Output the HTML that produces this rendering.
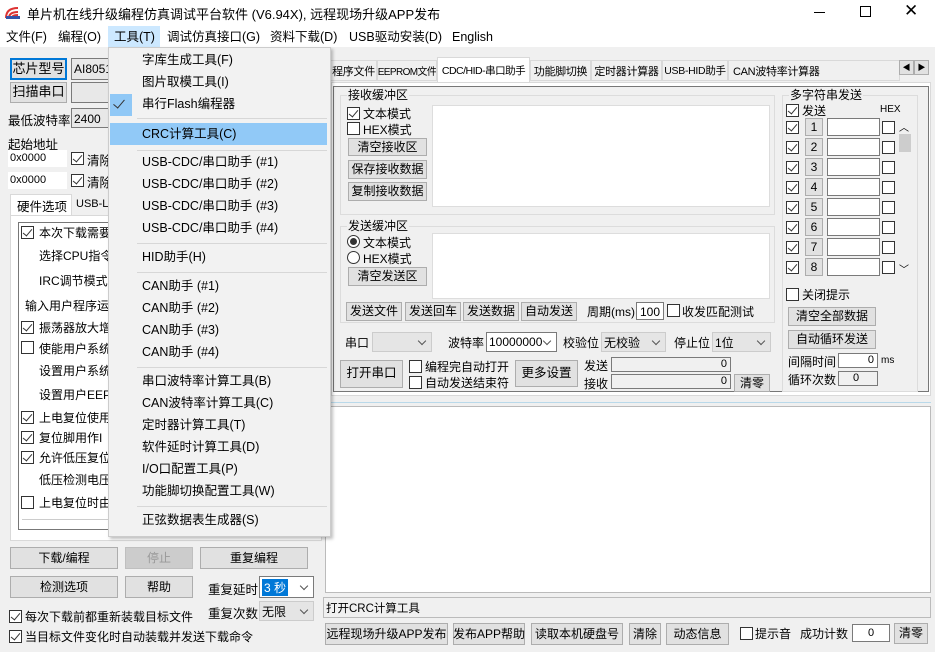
<!DOCTYPE html>
<html><head><meta charset="utf-8"><style>
*{box-sizing:border-box;margin:0;padding:0}
body{width:935px;height:652px;overflow:hidden;background:#f0f0f0;position:relative;font-family:"Liberation Sans","Noto Sans CJK SC",sans-serif;font-size:12px;color:#000}
.a{position:absolute;white-space:nowrap}
.m{position:absolute;top:28px;font-size:12.5px;line-height:18px;white-space:nowrap}
.b{position:absolute;background:#e1e1e1;border:1px solid #adadad;text-align:center;white-space:nowrap;line-height:1.4;display:flex;align-items:center;justify-content:center}
.cb{position:absolute;width:13px;height:13px;border:1px solid #333;background:#fff}
.cb.c::after{content:"";position:absolute;left:3px;top:0px;width:4px;height:8px;border:solid #333;border-width:0 1.5px 1.5px 0;transform:rotate(40deg)}
.in{position:absolute;background:#fff;border:1px solid #7a7a7a;white-space:nowrap;line-height:1.2}
.cmb{position:absolute;background:#fff;border:1px solid #7a7a7a;padding-left:2px;white-space:nowrap;display:flex;align-items:center}
.cmb::after{content:"";position:absolute;right:6px;top:calc(50% - 4px);width:5px;height:5px;border:solid #555;border-width:0 1px 1px 0;transform:rotate(45deg)}
.grp{position:absolute;border:1px solid #dcdcdc}
.lbl{position:absolute;background:#f0f0f0;padding:0 1px;white-space:nowrap;line-height:1}
.mi{position:absolute;left:142px;font-size:12.5px;line-height:16px;color:#000;white-space:nowrap}
.sep{position:absolute;left:137px;width:190px;height:1px;background:#d7d7d7}
.tab{position:absolute;top:60px;height:21px;border:1px solid #d9d9d9;background:#f0f0f0;display:flex;align-items:center;justify-content:center;white-space:nowrap;font-size:11px;letter-spacing:-0.3px;overflow:hidden}
</style></head><body>
<div class="a" style="left:0;top:0;width:935px;height:47px;background:#fff"></div>
<svg class="a" style="left:4px;top:4px" width="18" height="16"><path d="M2 14 Q2 4 14 4" stroke="#d33" stroke-width="2" fill="none"/><path d="M5 14 Q5 8 14 8" stroke="#d33" stroke-width="2" fill="none"/><path d="M8 14 Q8 11 14 11" stroke="#d33" stroke-width="2" fill="none"/><rect x="2" y="12" width="14" height="3" fill="#35a"/></svg>
<div class="a" style="left:27px;top:4px;font-size:13px">单片机在线升级编程仿真调试平台软件 (V6.94X), 远程现场升级APP发布</div>
<div class="a" style="left:814px;top:12px;width:11px;height:1px;background:#000"></div>
<div class="a" style="left:860px;top:6px;width:11px;height:11px;border:1px solid #000"></div>
<div class="a" style="left:904px;top:1px;font-size:17px">✕</div>
<div class="a" style="left:108px;top:26px;width:52px;height:22px;background:#cce8ff"></div>
<div class="m" style="left:6px">文件(F)</div>
<div class="m" style="left:58px">编程(O)</div>
<div class="m" style="left:114px">工具(T)</div>
<div class="m" style="left:167px">调试仿真接口(G)</div>
<div class="m" style="left:270px">资料下载(D)</div>
<div class="m" style="left:349px">USB驱动安装(D)</div>
<div class="m" style="left:452px">English</div>

<div class="b" style="left:10px;top:58px;width:57px;height:22px;border:2px solid #0078d7;font-size:13px">芯片型号</div>
<div class="in" style="left:71px;top:58px;width:60px;height:22px;background:#e8e8e8;padding:3px 2px">AI8051</div>
<div class="b" style="left:10px;top:82px;width:57px;height:21px;font-size:13px">扫描串口</div>
<div class="in" style="left:71px;top:82px;width:60px;height:21px;background:#e8e8e8"></div>
<div class="a" style="left:8px;top:110px;font-size:12.5px">最低波特率</div>
<div class="in" style="left:71px;top:108px;width:60px;height:20px;background:#e8e8e8;padding:3px 2px">2400</div>
<div class="a" style="left:8px;top:134px;font-size:12.5px">起始地址</div>
<div class="in" style="left:8px;top:150px;width:59px;height:17px;border-color:#fff;font-size:11px;padding:1px">0x0000</div>
<div class="cb c" style="left:71px;top:152px"></div><div class="a" style="left:87px;top:150px;font-size:12.5px">清除</div>
<div class="in" style="left:8px;top:172px;width:59px;height:17px;border-color:#fff;font-size:11px;padding:1px">0x0000</div>
<div class="cb c" style="left:71px;top:174px"></div><div class="a" style="left:87px;top:172px;font-size:12.5px">清除</div>
<div class="a" style="left:10px;top:194px;width:62px;height:22px;background:#fff;border:1px solid #d9d9d9;border-bottom:none"></div>
<div class="a" style="left:17px;top:196px;font-size:12.5px">硬件选项</div>
<div class="a" style="left:76px;top:198px;font-size:11px">USB-L</div>
<div class="a" style="left:10px;top:215px;width:312px;height:326px;background:#fff;border:1px solid #d9d9d9"></div>
<div class="a" style="left:18px;top:222px;width:304px;height:308px;border:1px solid #777;background:#fff"></div>
<div class="cb c" style="left:21px;top:226px"></div><div class="a" style="left:39px;top:224px">本次下载需要</div>
<div class="a" style="left:39px;top:247px">选择CPU指令</div>
<div class="a" style="left:39px;top:272px">IRC调节模式</div>
<div class="a" style="left:25px;top:297px">输入用户程序运</div>
<div class="cb c" style="left:21px;top:321px"></div><div class="a" style="left:39px;top:319px">振荡器放大增</div>
<div class="cb" style="left:21px;top:341px"></div><div class="a" style="left:39px;top:340px">使能用户系统</div>
<div class="a" style="left:39px;top:362px">设置用户系统</div>
<div class="a" style="left:39px;top:386px">设置用户EEP</div>
<div class="cb c" style="left:21px;top:411px"></div><div class="a" style="left:39px;top:409px">上电复位使用</div>
<div class="cb c" style="left:21px;top:431px"></div><div class="a" style="left:39px;top:429px">复位脚用作I</div>
<div class="cb c" style="left:21px;top:451px"></div><div class="a" style="left:39px;top:449px">允许低压复位</div>
<div class="a" style="left:39px;top:471px">低压检测电压</div>
<div class="cb" style="left:21px;top:496px"></div><div class="a" style="left:39px;top:494px">上电复位时由</div>
<div class="a" style="left:22px;top:519px;width:300px;height:1px;background:#ccc"></div>
<div class="b" style="left:10px;top:547px;width:108px;height:22px">下载/编程</div>
<div class="b" style="left:125px;top:547px;width:68px;height:22px;background:#ccc;border-color:#bfbfbf;color:#999">停止</div>
<div class="b" style="left:200px;top:547px;width:108px;height:22px">重复编程</div>
<div class="b" style="left:10px;top:576px;width:108px;height:22px">检测选项</div>
<div class="b" style="left:125px;top:576px;width:68px;height:22px">帮助</div>
<div class="a" style="left:208px;top:579px;font-size:12.5px">重复延时</div>
<div class="cmb" style="left:259px;top:576px;width:55px;height:22px"><span style="background:#0078d7;color:#fff;padding:0 2px">3 秒</span></div>
<div class="a" style="left:208px;top:603px;font-size:12.5px">重复次数</div>
<div class="cmb" style="left:259px;top:601px;width:55px;height:20px;background:#e5e5e5;border-color:#ccc">无限</div>
<div class="cb c" style="left:9px;top:610px"></div><div class="a" style="left:25px;top:608px">每次下载前都重新装载目标文件</div>
<div class="cb c" style="left:9px;top:630px"></div><div class="a" style="left:25px;top:628px">当目标文件变化时自动装载并发送下载命令</div>

<div class="tab" style="left:330px;width:47px">程序文件</div>
<div class="tab" style="left:377px;width:60px;font-size:10px;letter-spacing:-0.6px">EEPROM文件</div>
<div class="tab" style="left:437px;top:57px;height:25px;width:93px;background:#fff;border-bottom:none;font-size:10.5px;letter-spacing:-0.5px">CDC/HID-串口助手</div>
<div class="tab" style="left:530px;width:61px">功能脚切换</div>
<div class="tab" style="left:591px;width:71px">定时器计算器</div>
<div class="tab" style="left:662px;width:66px;font-size:10.5px">USB-HID助手</div>
<div class="tab" style="left:728px;width:172px;justify-content:flex-start;padding-left:4px">CAN波特率计算器</div>
<div class="b" style="left:899px;top:60px;width:15px;height:15px;font-size:8px">◀</div>
<div class="b" style="left:914px;top:60px;width:15px;height:15px;font-size:8px">▶</div>
<div class="a" style="left:331px;top:82px;width:600px;height:314px;background:#fff;border:1px solid #d9d9d9"></div>
<div class="a" style="left:333px;top:86px;width:596px;height:306px;background:#f0f0f0;border:1px solid #777"></div>

<div class="grp" style="left:340px;top:95px;width:435px;height:120px"></div><div class="lbl" style="left:347px;top:89px">接收缓冲区</div>
<div class="in" style="left:432px;top:105px;width:338px;height:102px;border-color:#ddd"></div>
<div class="cb c" style="left:347px;top:107px"></div><div class="a" style="left:363px;top:105px">文本模式</div>
<div class="cb" style="left:347px;top:122px"></div><div class="a" style="left:363px;top:121px">HEX模式</div>
<div class="b" style="left:348px;top:138px;width:79px;height:18px">清空接收区</div>
<div class="b" style="left:348px;top:160px;width:79px;height:19px">保存接收数据</div>
<div class="b" style="left:348px;top:182px;width:79px;height:19px">复制接收数据</div>

<div class="grp" style="left:340px;top:226px;width:435px;height:97px"></div><div class="lbl" style="left:347px;top:220px">发送缓冲区</div>
<div class="in" style="left:432px;top:233px;width:338px;height:66px;border-color:#ddd"></div>
<div class="cb" style="left:347px;top:235px;border-radius:50%"></div><div class="a" style="left:350px;top:238px;width:7px;height:7px;border-radius:50%;background:#333"></div><div class="a" style="left:363px;top:234px">文本模式</div>
<div class="cb" style="left:347px;top:251px;border-radius:50%"></div><div class="a" style="left:363px;top:250px">HEX模式</div>
<div class="b" style="left:348px;top:267px;width:79px;height:19px">清空发送区</div>
<div class="b" style="left:346px;top:302px;width:56px;height:19px">发送文件</div>
<div class="b" style="left:405px;top:302px;width:56px;height:19px">发送回车</div>
<div class="b" style="left:463px;top:302px;width:56px;height:19px">发送数据</div>
<div class="b" style="left:521px;top:302px;width:56px;height:19px">自动发送</div>
<div class="a" style="left:587px;top:303px">周期(ms)</div>
<div class="in" style="left:636px;top:302px;width:28px;height:18px;text-align:center;padding-top:2px">100</div>
<div class="cb" style="left:667px;top:304px"></div><div class="a" style="left:682px;top:303px">收发匹配测试</div>

<div class="a" style="left:345px;top:334px">串口</div>
<div class="cmb" style="left:372px;top:332px;width:60px;height:20px;background:#e5e5e5;border-color:#ccc"></div>
<div class="a" style="left:448px;top:334px">波特率</div>
<div class="cmb" style="left:486px;top:332px;width:71px;height:20px">10000000</div>
<div class="a" style="left:563px;top:334px">校验位</div>
<div class="cmb" style="left:601px;top:332px;width:65px;height:20px;background:#e5e5e5;border-color:#ccc">无校验</div>
<div class="a" style="left:674px;top:334px">停止位</div>
<div class="cmb" style="left:712px;top:332px;width:59px;height:20px;background:#e5e5e5;border-color:#ccc">1位</div>
<div class="b" style="left:340px;top:360px;width:63px;height:28px;font-size:12.5px">打开串口</div>
<div class="cb" style="left:409px;top:360px"></div><div class="a" style="left:425px;top:358px">编程完自动打开</div>
<div class="cb" style="left:409px;top:376px"></div><div class="a" style="left:425px;top:374px">自动发送结束符</div>
<div class="b" style="left:515px;top:360px;width:63px;height:27px;font-size:12.5px">更多设置</div>
<div class="a" style="left:584px;top:357px">发送</div>
<div class="in" style="left:611px;top:357px;width:120px;height:15px;background:#f0f0f0;text-align:right;padding-right:3px;font-size:11px">0</div>
<div class="a" style="left:584px;top:375px">接收</div>
<div class="in" style="left:611px;top:374px;width:120px;height:15px;background:#f0f0f0;text-align:right;padding-right:3px;font-size:11px">0</div>
<div class="b" style="left:734px;top:374px;width:36px;height:18px">清零</div>

<div class="grp" style="left:782px;top:95px;width:136px;height:297px"></div><div class="lbl" style="left:789px;top:89px">多字符串发送</div>
<div class="cb c" style="left:786px;top:104px"></div><div class="a" style="left:802px;top:102px">发送</div>
<div class="a" style="left:880px;top:104px;font-size:10px">HEX</div>
<div class="a" style="left:897px;top:120px;width:15px;height:156px;background:#f0f0f0"></div>
<div class="a" style="left:899px;top:119px;font-size:10px">︿</div>
<div class="a" style="left:899px;top:134px;width:12px;height:18px;background:#cdcdcd"></div>
<div class="a" style="left:899px;top:261px;font-size:10px">﹀</div>
<div class="cb" style="left:786px;top:288px"></div><div class="a" style="left:802px;top:286px">关闭提示</div>
<div class="b" style="left:788px;top:307px;width:88px;height:19px">清空全部数据</div>
<div class="b" style="left:788px;top:330px;width:88px;height:19px">自动循环发送</div>
<div class="a" style="left:788px;top:353px">间隔时间</div>
<div class="in" style="left:838px;top:353px;width:40px;height:15px;text-align:right;padding-right:3px;font-size:11px">0</div>
<div class="a" style="left:881px;top:355px;font-size:10px">ms</div>
<div class="a" style="left:788px;top:371px">循环次数</div>
<div class="in" style="left:838px;top:371px;width:40px;height:15px;background:#f0f0f0;padding-left:14px;font-size:11px">0</div>

<div class="cb c" style="left:786px;top:121px"></div><div class="b" style="left:805px;top:118px;width:18px;height:18px">1</div><div class="in" style="left:827px;top:118px;width:53px;height:18px"></div><div class="cb" style="left:882px;top:121px"></div>
<div class="cb c" style="left:786px;top:141px"></div><div class="b" style="left:805px;top:138px;width:18px;height:18px">2</div><div class="in" style="left:827px;top:138px;width:53px;height:18px"></div><div class="cb" style="left:882px;top:141px"></div>
<div class="cb c" style="left:786px;top:161px"></div><div class="b" style="left:805px;top:158px;width:18px;height:18px">3</div><div class="in" style="left:827px;top:158px;width:53px;height:18px"></div><div class="cb" style="left:882px;top:161px"></div>
<div class="cb c" style="left:786px;top:181px"></div><div class="b" style="left:805px;top:178px;width:18px;height:18px">4</div><div class="in" style="left:827px;top:178px;width:53px;height:18px"></div><div class="cb" style="left:882px;top:181px"></div>
<div class="cb c" style="left:786px;top:201px"></div><div class="b" style="left:805px;top:198px;width:18px;height:18px">5</div><div class="in" style="left:827px;top:198px;width:53px;height:18px"></div><div class="cb" style="left:882px;top:201px"></div>
<div class="cb c" style="left:786px;top:221px"></div><div class="b" style="left:805px;top:218px;width:18px;height:18px">6</div><div class="in" style="left:827px;top:218px;width:53px;height:18px"></div><div class="cb" style="left:882px;top:221px"></div>
<div class="cb c" style="left:786px;top:241px"></div><div class="b" style="left:805px;top:238px;width:18px;height:18px">7</div><div class="in" style="left:827px;top:238px;width:53px;height:18px"></div><div class="cb" style="left:882px;top:241px"></div>
<div class="cb c" style="left:786px;top:261px"></div><div class="b" style="left:805px;top:258px;width:18px;height:18px">8</div><div class="in" style="left:827px;top:258px;width:53px;height:18px"></div><div class="cb" style="left:882px;top:261px"></div>

<div class="a" style="left:325px;top:402px;width:606px;height:1px;background:#b9d9ea"></div>
<div class="a" style="left:325px;top:406px;width:606px;height:187px;background:#fff;border:1px solid #bbb"></div>
<div class="a" style="left:323px;top:597px;width:608px;height:21px;border:1px solid #bbb;padding:2px 2px;font-size:11.5px">打开CRC计算工具</div>
<div class="b" style="left:325px;top:623px;width:123px;height:22px">远程现场升级APP发布</div>
<div class="b" style="left:453px;top:623px;width:72px;height:22px">发布APP帮助</div>
<div class="b" style="left:531px;top:623px;width:92px;height:22px">读取本机硬盘号</div>
<div class="b" style="left:629px;top:623px;width:32px;height:22px">清除</div>
<div class="b" style="left:666px;top:623px;width:63px;height:22px">动态信息</div>
<div class="cb" style="left:740px;top:627px"></div><div class="a" style="left:755px;top:625px">提示音</div>
<div class="a" style="left:800px;top:625px">成功计数</div>
<div class="in" style="left:852px;top:624px;width:38px;height:18px;text-align:center;padding-top:2px;font-size:11px">0</div>
<div class="b" style="left:894px;top:623px;width:34px;height:21px">清零</div>

<div class="a" style="left:108px;top:47px;width:223px;height:490px;background:#f2f2f2;border:1px solid #ccc;box-shadow:2px 2px 3px rgba(0,0,0,.25)"></div>
<div class="a" style="left:110px;top:94px;width:22px;height:22px;background:#90c8f6"></div>
<div class="a" style="left:116px;top:97px;width:6px;height:11px;border:solid #333;border-width:0 1.5px 1.5px 0;transform:rotate(40deg)"></div>
<div class="a" style="left:110px;top:123px;width:217px;height:22px;background:#91c9f7"></div>
<div class="mi" style="top:52px">字库生成工具(F)</div>
<div class="mi" style="top:74px">图片取模工具(I)</div>
<div class="mi" style="top:96px">串行Flash编程器</div>
<div class="sep" style="top:118px"></div>
<div class="mi" style="top:126px">CRC计算工具(C)</div>
<div class="sep" style="top:150px"></div>
<div class="mi" style="top:154px">USB-CDC/串口助手 (#1)</div>
<div class="mi" style="top:176px">USB-CDC/串口助手 (#2)</div>
<div class="mi" style="top:198px">USB-CDC/串口助手 (#3)</div>
<div class="mi" style="top:220px">USB-CDC/串口助手 (#4)</div>
<div class="sep" style="top:243px"></div>
<div class="mi" style="top:249px">HID助手(H)</div>
<div class="sep" style="top:272px"></div>
<div class="mi" style="top:278px">CAN助手 (#1)</div>
<div class="mi" style="top:300px">CAN助手 (#2)</div>
<div class="mi" style="top:322px">CAN助手 (#3)</div>
<div class="mi" style="top:344px">CAN助手 (#4)</div>
<div class="sep" style="top:367px"></div>
<div class="mi" style="top:373px">串口波特率计算工具(B)</div>
<div class="mi" style="top:395px">CAN波特率计算工具(C)</div>
<div class="mi" style="top:417px">定时器计算工具(T)</div>
<div class="mi" style="top:439px">软件延时计算工具(D)</div>
<div class="mi" style="top:461px">I/O口配置工具(P)</div>
<div class="mi" style="top:483px">功能脚切换配置工具(W)</div>
<div class="sep" style="top:506px"></div>
<div class="mi" style="top:512px">正弦数据表生成器(S)</div>
</body></html>
